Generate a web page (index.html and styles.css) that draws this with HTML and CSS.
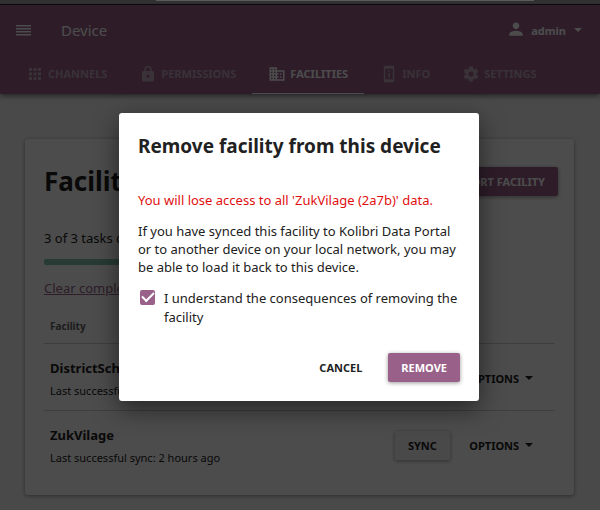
FILE: index.html
```html
<!DOCTYPE html>
<html lang="en">
<head>
<meta charset="utf-8">
<title>Device - Facilities</title>
<link rel="stylesheet" href="styles.css">
</head>
<body>
<div class="window-edge"><div class="window-edge-field"></div></div>
<div class="app">
  <header class="app-header">
    <div class="app-bar">
      <button class="icon-button" type="button" aria-label="Menu">
        <svg width="16" height="12" viewBox="0 0 16 12" fill="currentColor"><path d="M0 1h15v1.5H0zM0 4h15v1.5H0zM0 7h15v1.5H0zM0 10h15v1.5H0z"/></svg>
      </button>
      <span class="app-title">Device</span>
      <button class="user-button" type="button">
        <svg width="20" height="20" viewBox="0 0 24 24" fill="currentColor"><path d="M12 11c2.210 0 4-1.790 4-4s-1.790-4-4-4-4 1.790-4 4 1.790 4 4 4zm0 2c-2.670 0-8 1.340-8 4v2h16v-2c0-2.660-5.330-4-8-4z"/></svg>
        <span>admin</span>
        <svg class="caret" width="8" height="4" viewBox="0 0 8 4" fill="currentColor"><path d="M0 0h8L4 4z"/></svg>
      </button>
    </div>
    <nav class="tabs">
      <a class="tab" href="#channels">
        <svg width="18" height="18" viewBox="0 0 24 24" fill="currentColor"><path d="M4 8h4V4H4v4zm6 12h4v-4h-4v4zm-6 0h4v-4H4v4zm0-6h4v-4H4v4zm6 0h4v-4h-4v4zm6-10v4h4V4h-4zm-6 4h4V4h-4v4zm6 6h4v-4h-4v4zm0 6h4v-4h-4v4z"/></svg>
        <span>CHANNELS</span>
      </a>
      <a class="tab" href="#permissions">
        <svg width="18" height="18" viewBox="0 0 24 24" fill="currentColor"><path d="M18 8h-1V6c0-2.760-2.240-5-5-5S7 3.240 7 6v2H6c-1.100 0-2 .9-2 2v10c0 1.100.9 2 2 2h12c1.100 0 2-.9 2-2V10c0-1.100-.9-2-2-2zm-6 9c-1.100 0-2-.9-2-2s.9-2 2-2 2 .9 2 2-.9 2-2 2zm3.100-9H8.900V6c0-1.710 1.390-3.100 3.100-3.100s3.100 1.390 3.100 3.100v2z"/></svg>
        <span>PERMISSIONS</span>
      </a>
      <a class="tab tab-active" href="#facilities" aria-current="page">
        <svg width="18" height="18" viewBox="0 0 24 24" fill="currentColor"><path d="M12 7V3H2v18h20V7H12zM6 19H4v-2h2v2zm0-4H4v-2h2v2zm0-4H4V9h2v2zm0-4H4V5h2v2zm4 12H8v-2h2v2zm0-4H8v-2h2v2zm0-4H8V9h2v2zm0-4H8V5h2v2zm10 12h-8v-2h2v-2h-2v-2h2v-2h-2V9h8v10zm-2-8h-2v2h2v-2zm0 4h-2v2h2v-2z"/></svg>
        <span>FACILITIES</span>
      </a>
      <a class="tab" href="#info">
        <svg width="18" height="18" viewBox="0 0 24 24" fill="currentColor"><path d="M13 7h-2v2h2V7zm0 4h-2v6h2v-6zm4-9.990L7 1c-1.100 0-2 .9-2 2v18c0 1.100.9 2 2 2h10c1.100 0 2-.9 2-2V3c0-1.100-.9-1.990-2-1.990zM17 19H7V5h10v14z"/></svg>
        <span>INFO</span>
      </a>
      <a class="tab" href="#settings">
        <svg width="18" height="18" viewBox="0 0 24 24" fill="currentColor"><path d="M19.430 12.980c.04-.32.070-.64.070-.98s-.03-.66-.07-.98l2.110-1.650c.19-.15.240-.42.120-.64l-2-3.460c-.12-.22-.39-.3-.61-.22l-2.490 1c-.52-.4-1.080-.73-1.690-.98l-.38-2.650C14.460 2.180 14.250 2 14 2h-4c-.25 0-.46.180-.49.420l-.38 2.650c-.61.250-1.170.590-1.690.980l-2.490-1c-.23-.09-.49 0-.61.220l-2 3.460c-.13.220-.07.490.120.640l2.110 1.650c-.04.320-.07.650-.07.980s.03.660.070.980l-2.110 1.650c-.19.150-.24.420-.12.640l2 3.460c.12.220.39.300.61.220l2.490-1c.52.400 1.080.730 1.690.980l.38 2.650c.03.240.24.420.49.420h4c.25 0 .46-.18.490-.42l.38-2.650c.61-.25 1.170-.59 1.690-.98l2.490 1c.23.090.49 0 .61-.22l2-3.460c.12-.22.070-.49-.12-.64l-2.110-1.650zM12 15.500c-1.930 0-3.500-1.570-3.500-3.500s1.570-3.500 3.500-3.500 3.500 1.570 3.500 3.500-1.570 3.500-3.500 3.500z"/></svg>
        <span>SETTINGS</span>
      </a>
    </nav>
  </header>

  <main class="card">
    <div class="card-head">
      <h1>Facilities</h1>
      <button class="button button-primary" type="button">IMPORT FACILITY</button>
    </div>
    <p class="task-status">3 of 3 tasks complete</p>
    <div class="progress"></div>
    <a class="clear-link" href="#clear">Clear completed</a>
    <table class="facilities">
      <thead>
        <tr><th scope="col" colspan="2">Facility</th></tr>
      </thead>
      <tbody>
        <tr>
          <td><strong>DistrictSchool</strong><span class="sync-time">Last successful sync</span></td>
          <td class="actions">
            <button class="button button-flat" type="button">OPTIONS <svg class="caret" width="8" height="4" viewBox="0 0 8 4" fill="currentColor"><path d="M0 0h8L4 4z"/></svg></button>
          </td>
        </tr>
        <tr>
          <td><strong>ZukVilage</strong><span class="sync-time">Last successful sync: 2 hours ago</span></td>
          <td class="actions">
            <button class="button button-raised" type="button">SYNC</button>
            <button class="button button-flat" type="button">OPTIONS <svg class="caret" width="8" height="4" viewBox="0 0 8 4" fill="currentColor"><path d="M0 0h8L4 4z"/></svg></button>
          </td>
        </tr>
      </tbody>
    </table>
  </main>

  <div class="backdrop">
    <form class="modal" role="dialog" aria-modal="true" aria-labelledby="modal-title">
      <h2 id="modal-title">Remove facility from this device</h2>
      <p class="warning">You will lose access to all 'ZukVilage (2a7b)' data.</p>
      <p>If you have synced this facility to Kolibri Data Portal or to another device on your local network, you may be able to load it back to this device.</p>
      <div class="confirm">
        <input class="checkbox" type="checkbox" id="understand" checked>
        <label for="understand">I understand the consequences of removing the facility</label>
      </div>
      <div class="modal-actions">
        <button class="button button-flat" type="button">CANCEL</button>
        <button class="button button-primary" type="submit">REMOVE</button>
      </div>
    </form>
  </div>
</div>
</body>
</html>
```

FILE: styles.css
```css
* {
  box-sizing: border-box;
}

html,
body {
  height: 100%;
}

body {
  margin: 0;
  display: flex;
  flex-direction: column;
  overflow: hidden;
  background: #f5f5f5;
  color: #212121;
  font: 13px/18px "Noto Sans", sans-serif;
}

h1,
h2,
p {
  margin: 0;
}

button {
  font-family: inherit;
  border: 0;
  padding: 0;
  background: none;
  color: inherit;
}

svg {
  display: block;
  flex: none;
}

.window-edge {
  height: 5px;
  flex: none;
  background: #323232;
  border-bottom: 1px solid #0c0c0c;
}

.window-edge-field {
  width: 63%;
  height: 1px;
  margin: 0 auto 0 26%;
  background: #5c5c5c;
}

.app {
  position: relative;
  flex: 1;
}

.app-header {
  background: #996189;
  color: #fff;
  box-shadow: 0 2px 5px rgba(0, 0, 0, 0.5);
}

.app-bar {
  display: flex;
  align-items: center;
  height: 50px;
  padding: 0 18px 0 16px;
}

.icon-button {
  width: 45px;
}

.app-title {
  flex: 1;
  font-size: 15px;
}

.user-button {
  display: flex;
  align-items: center;
  gap: 5px;
  font-size: 11px;
  font-weight: 700;
}

.tabs {
  display: flex;
  padding-left: 10px;
}

.tab {
  display: flex;
  align-items: center;
  gap: 4px;
  height: 39px;
  padding: 0 16px;
  border-bottom: 1px solid transparent;
  color: rgba(240, 255, 245, 0.45);
  font-size: 11px;
  font-weight: 700;
  text-decoration: none;
}

.tab-active {
  color: #fff;
  border-color: #fff;
}

.card {
  margin: 45px 26px 0 25px;
  padding: 24px 19px 18px;
  background: #fff;
  border-radius: 3px;
  box-shadow: 0 1px 4px rgba(0, 0, 0, 0.4);
}

.card-head {
  display: flex;
  align-items: center;
  justify-content: space-between;
  margin-right: -3px;
}

h1 {
  font-size: 26px;
  line-height: 36px;
}

.task-status {
  margin-top: 30px;
}

.progress {
  width: 80%;
  height: 6px;
  margin: 12px 0 14px;
  border-radius: 2px;
  background: #82c3ac;
}

.clear-link {
  display: block;
  width: max-content;
  color: #996189;
}

.facilities {
  width: 100%;
  border-collapse: collapse;
}

.facilities th {
  height: 46px;
  padding: 12px 6px 0;
  color: #616161;
  font-size: 10px;
  text-align: left;
}

.facilities td {
  height: 67px;
  padding: 6px 6px 0;
}

.facilities tbody tr {
  border-top: 1px solid #cfcfcf;
}

.facilities strong,
.sync-time {
  display: block;
}

.sync-time {
  margin-top: 5px;
  font-size: 11px;
}

.facilities .actions {
  padding: 4px 22px 0 0;
  text-align: right;
  white-space: nowrap;
}

.button {
  height: 29px;
  padding: 0 13px;
  border-radius: 2px;
  font-size: 11px;
  font-weight: 700;
}

.button-primary {
  background: #996189;
  color: #fff;
  box-shadow: 0 1px 4px rgba(0, 0, 0, 0.4);
}

.button-raised {
  background: #f5f5f5;
  box-shadow: 0 1px 4px rgba(0, 0, 0, 0.4);
}

.actions .button-flat {
  padding: 0 0 0 16px;
}

.caret {
  display: inline-block;
  margin-left: 3px;
  vertical-align: 3px;
}

.backdrop {
  position: absolute;
  inset: 0;
  display: flex;
  align-items: center;
  justify-content: center;
  padding-bottom: 2px;
  background: rgba(0, 0, 0, 0.7);
}

.modal {
  width: 60%;
  min-width: 320px;
  margin-left: -2px;
  padding: 19px;
  background: #fff;
  border-radius: 3px;
  box-shadow: 0 8px 24px rgba(0, 0, 0, 0.5);
}

.modal h2 {
  margin-bottom: 31px;
  font-size: 19px;
  line-height: 28px;
}

.modal p {
  margin-bottom: 13px;
}

.modal .warning {
  color: #df0f0f;
}

.confirm {
  display: flex;
  gap: 9px;
  padding-left: 2px;
  line-height: 19px;
}

.checkbox {
  appearance: none;
  flex: none;
  display: grid;
  place-items: center;
  width: 15px;
  height: 15px;
  margin: 1px 0;
  border-radius: 2px;
  background: #996189;
}

.checkbox:checked::before {
  content: "";
  width: 10px;
  height: 5px;
  margin-bottom: 3px;
  border: solid #fff;
  border-width: 0 0 2px 2px;
  transform: rotate(-45deg);
}

.modal-actions {
  display: flex;
  justify-content: flex-end;
  gap: 13px;
  margin-top: 26px;
}
```
